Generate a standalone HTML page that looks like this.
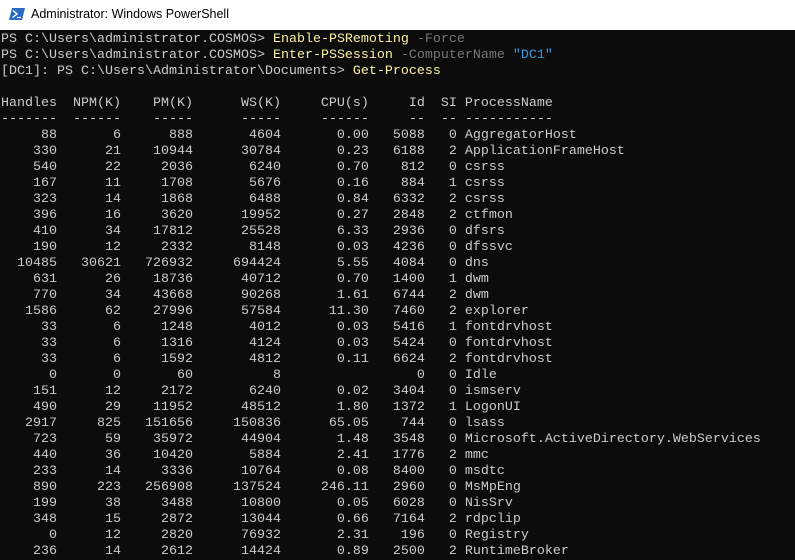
<!DOCTYPE html>
<html><head><meta charset="utf-8"><style>
html,body{margin:0;padding:0;width:795px;height:560px;overflow:hidden;background:#0c0c0c}
#tb{position:absolute;left:0;top:0;width:795px;height:30px;background:#fff}
#tb .t{position:absolute;left:31px;top:7px;font:12.5px "Liberation Sans",sans-serif;color:#000}
#con{position:absolute;left:1px;top:32px;margin:0;font-family:"Liberation Mono",monospace;font-size:13.33px;line-height:16px;color:#cccccc;white-space:pre}
.y{color:#f9f1a5}.g{color:#767676}.b{color:#3a96dd}
</style></head><body>
<div id="tb"><svg style="position:absolute;left:9px;top:8px" width="16" height="12" viewBox="0 0 16 12"><polygon points="3,0 16,0 13,12 0,12" fill="#2a6bc2"/><polyline points="4,2.5 8,6 3.5,9.5" fill="none" stroke="#fff" stroke-width="1.4"/><line x1="8" y1="9.5" x2="12" y2="9.5" stroke="#fff" stroke-width="1.2"/></svg><span class="t">Administrator: Windows PowerShell</span></div>
<pre id="con">PS C:\Users\administrator.COSMOS&gt; <span class="y">Enable-PSRemoting</span> <span class="g">-Force</span>
PS C:\Users\administrator.COSMOS&gt; <span class="y">Enter-PSSession</span> <span class="g">-ComputerName</span> <span class="b">"DC1"</span>
[DC1]: PS C:\Users\Administrator\Documents&gt; <span class="y">Get-Process</span>

Handles  NPM(K)    PM(K)      WS(K)     CPU(s)     Id  SI ProcessName
-------  ------    -----      -----     ------     --  -- -----------
     88       6      888       4604       0.00   5088   0 AggregatorHost
    330      21    10944      30784       0.23   6188   2 ApplicationFrameHost
    540      22     2036       6240       0.70    812   0 csrss
    167      11     1708       5676       0.16    884   1 csrss
    323      14     1868       6488       0.84   6332   2 csrss
    396      16     3620      19952       0.27   2848   2 ctfmon
    410      34    17812      25528       6.33   2936   0 dfsrs
    190      12     2332       8148       0.03   4236   0 dfssvc
  10485   30621   726932     694424       5.55   4084   0 dns
    631      26    18736      40712       0.70   1400   1 dwm
    770      34    43668      90268       1.61   6744   2 dwm
   1586      62    27996      57584      11.30   7460   2 explorer
     33       6     1248       4012       0.03   5416   1 fontdrvhost
     33       6     1316       4124       0.03   5424   0 fontdrvhost
     33       6     1592       4812       0.11   6624   2 fontdrvhost
      0       0       60          8                 0   0 Idle
    151      12     2172       6240       0.02   3404   0 ismserv
    490      29    11952      48512       1.80   1372   1 LogonUI
   2917     825   151656     150836      65.05    744   0 lsass
    723      59    35972      44904       1.48   3548   0 Microsoft.ActiveDirectory.WebServices
    440      36    10420       5884       2.41   1776   2 mmc
    233      14     3336      10764       0.08   8400   0 msdtc
    890     223   256908     137524     246.11   2960   0 MsMpEng
    199      38     3488      10800       0.05   6028   0 NisSrv
    348      15     2872      13044       0.66   7164   2 rdpclip
      0      12     2820      76932       2.31    196   0 Registry
    236      14     2612      14424       0.89   2500   2 RuntimeBroker</pre>
</body></html>
